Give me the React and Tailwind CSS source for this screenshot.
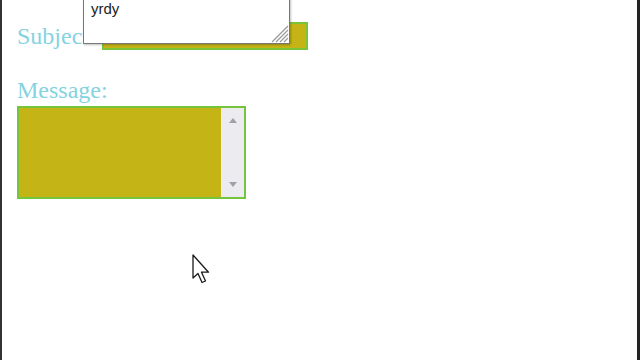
import React from "react";

function Cursor() {
  return (
    <svg width="20" height="32" viewBox="0 0 20 32" className="absolute left-[190px] top-[254px]">
      <path d="M1 1 L1 24 L6 19.5 L10 28.5 L13.5 27 L9.5 18.2 L16.5 18.2 Z" fill="#fff" stroke="#1a1a1a" strokeWidth="1.3" strokeLinejoin="round" />
    </svg>
  );
}

function Grip() {
  return (
    <svg width="20" height="20" viewBox="0 0 20 20" className="absolute right-0 bottom-0">
      <path d="M19 3 L3 19 M19 7 L7 19 M19 11 L11 19 M19 15 L15 19" stroke="#999" strokeWidth="1.2" />
    </svg>
  );
}

export default function App() {
  return (
    <div className="relative w-[640px] h-[360px] overflow-hidden bg-white border-l-2 border-l-[#333] border-r-[3px] border-r-[#222]">
      <div className="pl-[15px] pt-[22px]" style={{ fontFamily: '"Liberation Serif", serif' }}>
        <div className="flex items-end gap-[6px]">
          <span className="text-[24px] leading-[28px] text-[#84d3e2]">Subject:</span>
          <div className="w-[206px] h-[28px] bg-[#c5b415] border-2 border-[#7ac43a]" />
        </div>
        <div className="mt-[26px] text-[24px] leading-[28px] text-[#84d3e2]">Message:</div>
        <div className="mt-[2px] flex w-[229px] h-[93px] border-2 border-[#74c43c] bg-[#c5b415]">
          <div className="flex-1" />
          <div className="w-[23px] bg-[#ececf0] flex flex-col items-center justify-between py-[10px]">
            <svg width="8" height="5" viewBox="0 0 8 5"><path d="M0 5 L4 0 L8 5 Z" fill="#a0a0a8" /></svg>
            <svg width="8" height="5" viewBox="0 0 8 5"><path d="M0 0 L4 5 L8 0 Z" fill="#a0a0a8" /></svg>
          </div>
        </div>
      </div>

      <div className="absolute left-[81px] top-[-12px] w-[207px] h-[56px] bg-white border border-[#777] shadow-[1px_1px_2px_rgba(0,0,0,0.25)]">
        <div className="pl-[7px] pt-[12px] text-[15px] leading-[16px] text-[#222]" style={{ fontFamily: '"Liberation Sans", Arial, sans-serif' }}>yrdy</div>
        <Grip />
      </div>

      <Cursor />
    </div>
  );
}
